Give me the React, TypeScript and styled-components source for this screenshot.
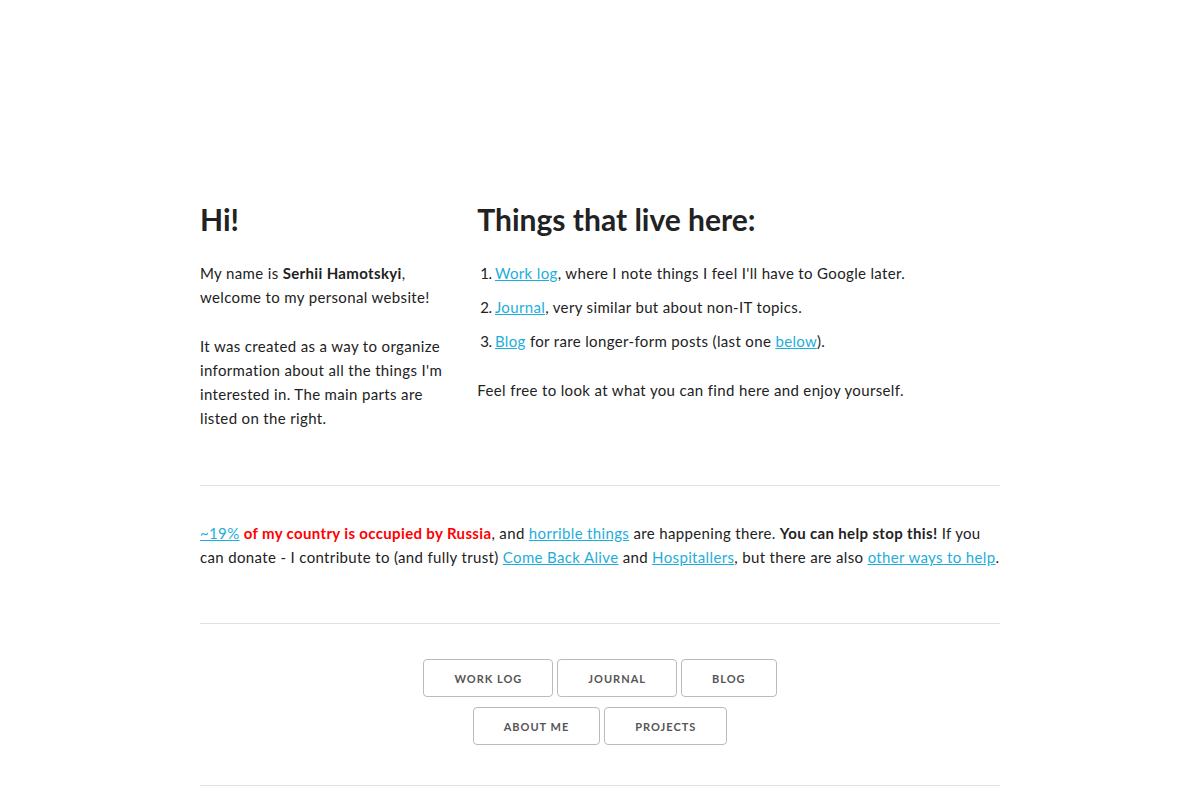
import React from "react";
import styled, { createGlobalStyle } from "styled-components";

const Global = createGlobalStyle`
  html { font-size: 62.5%; }
  body {
    margin: 0;
    font-size: 1.5em;
    line-height: 1.6;
    font-weight: 400;
    font-family: "Lato", "Liberation Sans", sans-serif;
    letter-spacing: 0.35px;
    color: #222;
    background: #fff;
  }
  *, *::before, *::after { box-sizing: border-box; }
`;

const Container = styled.div`
  width: 100%;
  max-width: 800px;
  margin: 0 auto;
`;

const Row = styled.div`
  display: flex;
  margin-top: 202px;
`;

const Column = styled.div<{ $w: number; $first?: boolean }>`
  width: ${(p) => p.$w}%;
  margin-left: ${(p) => (p.$first ? 0 : 4)}%;
`;

const Section = styled.div`
  display: flow-root;
`;

const Heading = styled.h3`
  font-size: 3rem;
  line-height: 35px;
  font-weight: 700;
  letter-spacing: 0;
  margin: 0 0 24px;
`;

const P = styled.p`
  margin: 0 0 2.5rem;
`;

const Link = styled.a`
  color: #1eaedb;
  text-decoration: underline;
`;

const Strong = styled.b<{ $red?: boolean }>`
  font-weight: 700;
  color: ${(p) => (p.$red ? "#f00" : "inherit")};
`;

const List = styled.ol`
  list-style: decimal inside;
  padding-left: 3px;
  margin: 0 0 2.5rem;
`;

const Item = styled.li`
  margin-bottom: 1rem;
  line-height: 24px;
  &::marker { letter-spacing: -0.5px; }
`;

const Rule = styled.hr<{ $top?: number }>`
  margin: ${(p) => p.$top ?? 30}px 0 3.5rem;
  border: 0;
  border-top: 1px solid #e1e1e1;
`;

const Nav = styled.div`
  display: flow-root;
`;

const NavRow = styled.div`
  display: flex;
  justify-content: center;
  gap: 4px;
`;

const Button = styled.a`
  display: inline-block;
  height: 38px;
  padding: 0 30px;
  color: #555;
  text-align: center;
  font-size: 11px;
  font-weight: 700;
  line-height: 38px;
  letter-spacing: 0.1rem;
  text-transform: uppercase;
  text-decoration: none;
  white-space: nowrap;
  background: transparent;
  border-radius: 4px;
  border: 1px solid #bbb;
  margin-bottom: 1rem;
`;

export default function App() {
  return (
    <>
      <Global />
      <Container>
        <Row>
          <Column $w={30.6666666667} $first>
            <Heading>Hi!</Heading>
            <P>
              My name is <Strong>Serhii Hamotskyi</Strong>, welcome to my personal website!
            </P>
            <P>
              It was created as a way to organize information about all the things I'm
              interested in. The main parts are listed on the right.
            </P>
          </Column>
          <Column $w={65.3333333333}>
            <Heading>Things that live here:</Heading>
            <List>
              <Item>
                <Link href="#">Work log</Link>, where I note things I feel I'll have to Google later.
              </Item>
              <Item>
                <Link href="#">Journal</Link>, very similar but about non-IT topics.
              </Item>
              <Item>
                <Link href="#">Blog</Link> for rare longer-form posts (last one{" "}
                <Link href="#">below</Link>).
              </Item>
            </List>
            <P>Feel free to look at what you can find here and enjoy yourself.</P>
          </Column>
        </Row>
        <Rule />
        <Section>
          <P>
            <Link href="#">~19%</Link> <Strong $red>of my country is occupied by Russia</Strong>, and{" "}
            <Link href="#">horrible things</Link> are happening there.{" "}
            <Strong>You can help stop this!</Strong> If you can donate - I contribute to (and fully
            trust) <Link href="#">Come Back Alive</Link> and <Link href="#">Hospitallers</Link>, but
            there are also <Link href="#">other ways to help</Link>.
          </P>
        </Section>
        <Rule $top={29} />
        <Nav>
          <NavRow>
            <Button href="#">Work log</Button>
            <Button href="#">Journal</Button>
            <Button href="#">Blog</Button>
          </NavRow>
          <NavRow>
            <Button href="#">About me</Button>
            <Button href="#">Projects</Button>
          </NavRow>
        </Nav>
        <Rule />
      </Container>
    </>
  );
}
